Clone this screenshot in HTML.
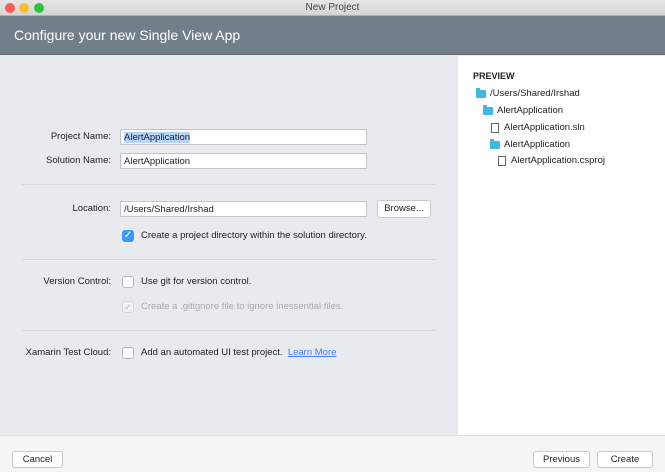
<!DOCTYPE html>
<html><head><meta charset="utf-8"><style>
*{margin:0;padding:0;box-sizing:border-box}
body{width:665px;height:472px;position:relative;overflow:hidden;font-family:"Liberation Sans",sans-serif;font-size:9.5px;line-height:12px;color:#222;background:#e8eaee}
.a{position:absolute}
.tb{left:0;top:0;width:665px;height:16px;background:linear-gradient(#e6e6e6,#d4d4d4);border-bottom:1px solid #b0b0b0;text-align:center;font-size:10px;line-height:15px;color:#444}
.dot{top:3px;width:10px;height:10px;border-radius:50%}
.hd{left:0;top:16px;width:665px;height:39px;background:#737f88;color:#fff;font-size:14px;line-height:38px;padding-left:14px;border-bottom:1px solid #5f6a72}
.right{left:458px;top:56px;width:207px;height:380px;background:#fff}
.foot{left:0;top:435px;width:665px;height:37px;background:#f5f5f5;border-top:1px solid #e0e0e0}
.lbl{text-align:right;width:100px;left:11px}
.in{left:120px;width:247px;height:16px;background:#fff;border:1px solid #c4c4c4;padding-left:3px;line-height:15px}
.btn{background:#fff;border:1px solid #c8c8c8;border-radius:3px;text-align:center}
.sep{left:22px;width:414px;height:1px;background:#d6d8dc}
.cb{width:12px;height:12px;border:1px solid #b8b8b8;border-radius:3px;background:#fff}
.fo{width:10px;height:8px;background:#3fb8e6;border-radius:1px}
.fo:before{content:"";position:absolute;left:0;top:-2px;width:4px;height:2px;background:#3fb8e6}
.fi{width:8px;height:10px;border:1px solid #666;background:#fff}
</style></head><body>
<div class="a tb">New Project</div>
<div class="a dot" style="left:5px;background:#fc5b57"></div>
<div class="a dot" style="left:19px;background:#fdbc2e"></div>
<div class="a dot" style="left:34px;background:#29c53f"></div>
<div class="a hd">Configure your new Single View App</div>
<div class="a right"></div>
<div class="a" style="left:473px;top:70px;font-weight:bold;font-size:9px">PREVIEW</div>
<div class="a fo" style="left:476px;top:90px"></div><div class="a" style="left:490px;top:88px">/Users/Shared/Irshad</div>
<div class="a fo" style="left:483px;top:107px"></div><div class="a" style="left:497px;top:105px">AlertApplication</div>
<div class="a fi" style="left:491px;top:123px"></div><div class="a" style="left:504px;top:122px">AlertApplication.sln</div>
<div class="a fo" style="left:490px;top:141px"></div><div class="a" style="left:504px;top:139px">AlertApplication</div>
<div class="a fi" style="left:498px;top:156px"></div><div class="a" style="left:511px;top:155px">AlertApplication.csproj</div>

<div class="a lbl" style="top:131px">Project Name:</div>
<div class="a in" style="top:129px"><span style="background:#b3d4fc">AlertApplication</span></div>
<div class="a lbl" style="top:155px">Solution Name:</div>
<div class="a in" style="top:153px">AlertApplication</div>
<div class="a sep" style="top:184px"></div>
<div class="a lbl" style="top:203px">Location:</div>
<div class="a in" style="top:201px">/Users/Shared/Irshad</div>
<div class="a btn" style="left:377px;top:200px;width:54px;height:18px;line-height:16px">Browse...</div>
<div class="a cb" style="left:122px;top:230px;background:#3b99fc;border-color:#3b99fc;color:#fff;font-size:10px;line-height:10px;text-align:center">✓</div>
<div class="a" style="left:141px;top:230px">Create a project directory within the solution directory.</div>
<div class="a sep" style="top:259px"></div>
<div class="a lbl" style="top:276px">Version Control:</div>
<div class="a cb" style="left:122px;top:276px"></div>
<div class="a" style="left:141px;top:276px">Use git for version control.</div>
<div class="a cb" style="left:122px;top:301px;background:#f0f1f3;border-color:#d8d8d8;color:#bbb;font-size:9px;line-height:10px;text-align:center">✓</div>
<div class="a" style="left:141px;top:301px;color:#aaa">Create a .gitignore file to ignore inessential files.</div>
<div class="a sep" style="top:330px"></div>
<div class="a lbl" style="top:347px">Xamarin Test Cloud:</div>
<div class="a cb" style="left:122px;top:347px"></div>
<div class="a" style="left:141px;top:347px">Add an automated UI test project. &nbsp;<span style="color:#3f82e0;text-decoration:underline">Learn More</span></div>

<div class="a foot"></div>
<div class="a btn" style="left:12px;top:451px;width:51px;height:17px;line-height:15px">Cancel</div>
<div class="a btn" style="left:533px;top:451px;width:57px;height:17px;line-height:15px">Previous</div>
<div class="a btn" style="left:597px;top:451px;width:56px;height:17px;line-height:15px">Create</div>
</body></html>
